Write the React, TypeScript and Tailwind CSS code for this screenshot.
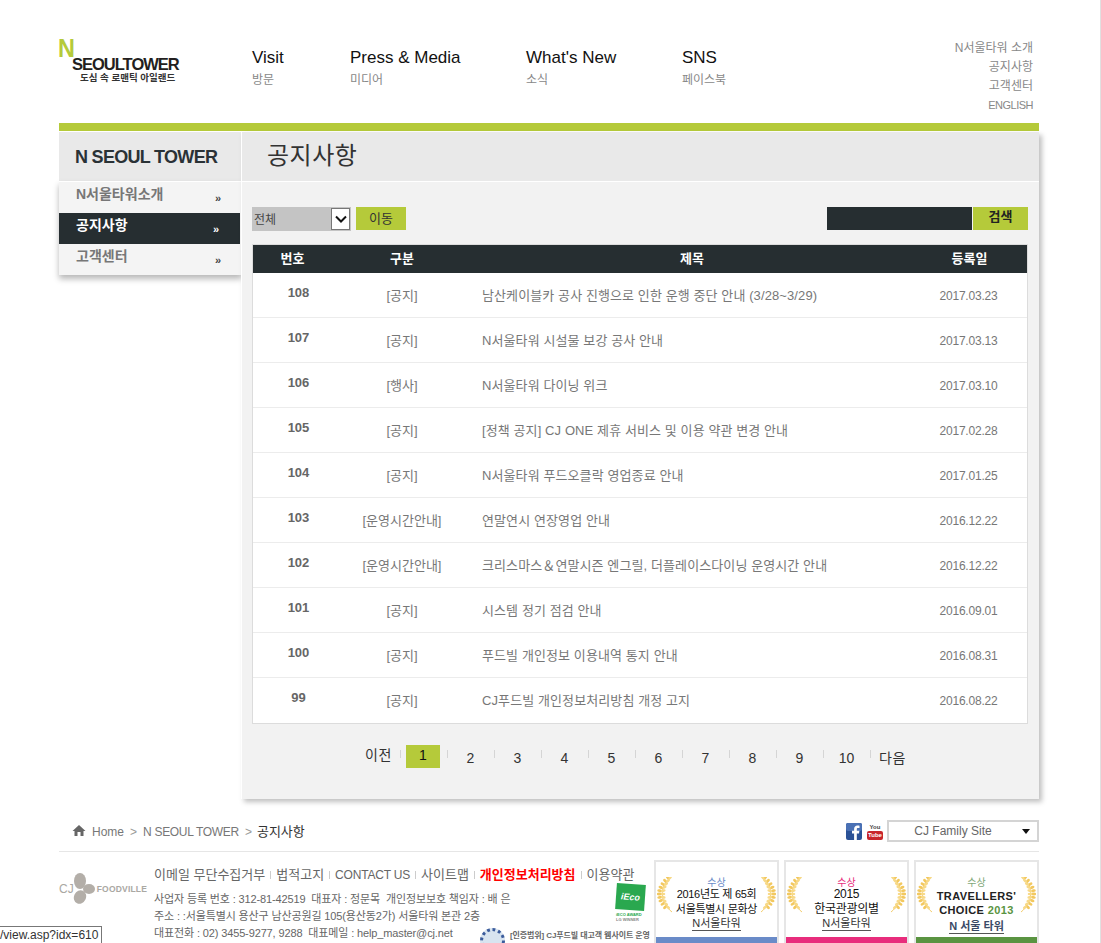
const KR = "font-['Liberation_Sans','Noto_Sans_CJK_KR',sans-serif]";

const NOTICES = [
  { no: 108, cat: "[공지]", title: "남산케이블카 공사 진행으로 인한 운행 중단 안내 (3/28~3/29)", date: "2017.03.23" },
  { no: 107, cat: "[공지]", title: "N서울타워 시설물 보강 공사 안내", date: "2017.03.13" },
  { no: 106, cat: "[행사]", title: "N서울타워 다이닝 위크", date: "2017.03.10" },
  { no: 105, cat: "[공지]", title: "[정책 공지] CJ ONE 제휴 서비스 및 이용 약관 변경 안내", date: "2017.02.28" },
  { no: 104, cat: "[공지]", title: "N서울타워 푸드오클락 영업종료 안내", date: "2017.01.25" },
  { no: 103, cat: "[운영시간안내]", title: "연말연시 연장영업 안내", date: "2016.12.22" },
  { no: 102, cat: "[운영시간안내]", title: "크리스마스＆연말시즌 엔그릴, 더플레이스다이닝 운영시간 안내", date: "2016.12.22" },
  { no: 101, cat: "[공지]", title: "시스템 정기 점검 안내", date: "2016.09.01" },
  { no: 100, cat: "[공지]", title: "푸드빌 개인정보 이용내역 통지 안내", date: "2016.08.31" },
  { no: 99, cat: "[공지]", title: "CJ푸드빌 개인정보처리방침 개정 고지", date: "2016.08.22" },
];

const NAV = [
  { en: "Visit", ko: "방문", w: "w-[98px]" },
  { en: "Press & Media", ko: "미디어", w: "w-[176px]" },
  { en: "What's New", ko: "소식", w: "w-[156px]" },
  { en: "SNS", ko: "페이스북", w: "w-[80px]" },
];

// 수상 배지 양쪽 월계수
function Laurel({ flip }: { flip?: boolean }) {
  const leaves = [0, 1, 2, 3, 4, 5, 6, 7, 8, 9];
  return (
    <svg width="16" height="36" viewBox="0 0 16 36" className={flip ? "-scale-x-100" : ""}>
      <path d="M12 2 C3 9 2 25 15 35" fill="none" stroke="#f3cd6d" strokeWidth="1" />
      {leaves.map((i) => {
        const t = i / 9;
        const x = 12 - 8 * Math.sin(t * Math.PI * 0.9);
        const y = 2 + t * 27;
        return (
          <g key={i}>
            <ellipse cx={x - 1.8} cy={y} rx="2.4" ry="1.4" fill="#f2c85f" transform={`rotate(${50 - t * 90} ${x} ${y})`} />
            <ellipse cx={x + 2} cy={y} rx="2.3" ry="1.3" fill="#f7d988" transform={`rotate(${-50 + t * 90} ${x} ${y})`} />
          </g>
        );
      })}
    </svg>
  );
}

function AwardCard({ label, labelColor, stripe, children, name }: { label: string; labelColor: string; stripe: string; children: React.ReactNode; name: React.ReactNode }) {
  return (
    <div className="w-[125px] h-[83px] border-2 border-[#e6e6e6] border-b-0 flex flex-col overflow-hidden">
      <div className="flex justify-between px-[1px] pt-[15px] h-[54px]">
        <Laurel />
        <div className="flex-1 flex flex-col items-center">
          <div className={`text-[10px] leading-[12px] ${labelColor}`}>{label}</div>
          {children}
        </div>
        <Laurel flip />
      </div>
      <div className="h-[17px] flex justify-center">{name}</div>
      <div className={`h-[6px] mt-auto ${stripe}`} />
    </div>
  );
}

export default function App() {
  return (
    <div className={`relative h-[943px] w-[1101px] overflow-hidden bg-white border-r border-[#e0e0e0] ${KR}`}>
      <div className="ml-[59px] w-[980px]">
        {/* 상단 헤더 */}
        <header className="h-[123px] flex">
          <div className="w-[193px] pt-[37px]">
            <div className="text-[#b5ca3a] font-bold text-[26px] leading-[22px] -ml-[1px] w-[16px] scale-x-90 origin-left">N</div>
            <div className="text-[#231f20] font-bold text-[16.5px] leading-[14px] -mt-[2px] ml-[13px] tracking-[-1px] whitespace-nowrap">SEOULTOWER</div>
            <div className="text-[#333] font-bold text-[9.5px] leading-[12px] mt-[1px] ml-[21px] whitespace-nowrap">도심 속 로맨틱 아일랜드</div>
          </div>
          <nav className="flex pt-[47px]">
            {NAV.map((n) => (
              <div key={n.en} className={n.w}>
                <div className="text-[17px] leading-[22px] text-[#111] whitespace-nowrap">{n.en}</div>
                <div className="text-[12px] leading-[14px] mt-[4px] text-[#888]">{n.ko}</div>
              </div>
            ))}
          </nav>
          <ul className="ml-auto mr-[6px] pt-[39px] text-right text-[12px] leading-[19px] text-[#888]">
            <li>N서울타워 소개</li>
            <li>공지사항</li>
            <li>고객센터</li>
            <li className="text-[11px] tracking-[-0.5px]">ENGLISH</li>
          </ul>
        </header>
        <div className="h-[8px] bg-[#b5ca3a]" />

        {/* 본문 */}
        <div className="flex mt-[1px]">
          <aside className="w-[183px]">
            <div className="h-[49px] bg-[#e9e9e9] pl-[16px] text-[#2a3236] font-bold text-[18px] leading-[50px] tracking-[-0.7px] whitespace-nowrap">N SEOUL TOWER</div>
            <div className="shadow-[0_4px_6px_rgba(0,0,0,0.28)] bg-[#f4f4f4] h-[94px] border-t border-white">
              {[
                ["N서울타워소개", false],
                ["공지사항", true],
                ["고객센터", false],
              ].map(([label, on]) => (
                <div
                  key={label as string}
                  className={`h-[31px] pl-[17px] pr-[21px] flex items-center justify-between text-[14px] font-bold ${on ? "bg-[#262e31] text-white mr-[2px]" : "text-[#777]"}`}
                >
                  <span className="-mt-[6px]">{label}</span>
                  <span className={`text-[11px] leading-none mt-[2px] ${on ? "text-white" : "text-[#444]"}`}>»</span>
                </div>
              ))}
            </div>
          </aside>

          <main className="w-[798px] shadow-[3px_3px_5px_rgba(0,0,0,0.25)] border-l border-white -ml-[1px] bg-[#f2f2f2]">
            <div className="h-[49px] bg-[#e9e9e9] border-b border-white pl-[25px] text-[24px] leading-[47px] text-[#333] tracking-[0.5px] box-content">공지사항</div>
            <div className="pl-[10px] pr-[11px] pt-[25px] h-[617px]">
              {/* 필터, 검색 */}
              <div className="flex items-start h-[37px]">
                <div className="w-[99px] h-[24px] bg-[#c4c4c4] flex items-center justify-between pl-[2px] pr-[1px] text-[12px] text-[#444]">
                  <span className="mt-[1px]">전체</span>
                  <span className="w-[19px] h-[22px] border border-[#777] bg-white flex items-center justify-center">
                    <svg width="12" height="8" viewBox="0 0 12 8">
                      <path d="M1 1.5 L6 6.5 L11 1.5" fill="none" stroke="#111" strokeWidth="2" />
                    </svg>
                  </span>
                </div>
                <div className="ml-[5px] w-[50px] h-[23px] bg-[#b5ca3a] text-center text-[13px] leading-[23px] text-[#333]">이동</div>
                <div className="ml-auto w-[145px] h-[23px] bg-[#262e31]" />
                <div className="ml-[1px] w-[55px] h-[23px] bg-[#b5ca3a] text-center text-[13px] leading-[19px] font-bold text-[#222]">검색</div>
              </div>

              {/* 공지 목록 */}
              <div className="border border-[#dcdcdc] bg-white w-[776px]">
                <div className="grid grid-cols-[79px_140px_440px_1fr] h-[28px] bg-[#262e31] text-white text-[13px] font-bold leading-[27px] text-center">
                  <div>번호</div>
                  <div>구분</div>
                  <div>제목</div>
                  <div>등록일</div>
                </div>
                {NOTICES.map((n, i) => (
                  <div
                    key={n.no}
                    className={`grid grid-cols-[79px_140px_440px_1fr] h-[45px] text-[13px] text-[#777] text-center ${i < 9 ? "border-b border-[#ececec]" : ""}`}
                  >
                    <div className="font-bold text-[#666] pt-[11px] pl-[12px] leading-[18px]">{n.no}</div>
                    <div className="pt-[14px] leading-[18px]">{n.cat}</div>
                    <div className="pt-[14px] leading-[18px] text-left pl-[10px] whitespace-nowrap tracking-[0.1px]">{n.title}</div>
                    <div className="pt-[14px] pr-[2px] leading-[18px] text-[12px] tracking-[-0.2px]">{n.date}</div>
                  </div>
                ))}
              </div>

              {/* 페이지 */}
              <div className="flex items-start mt-[21px] ml-[110px] text-[14px] text-[#333]">
                <div className="w-[38px] pl-[3px] leading-[20px] tracking-[0.5px] whitespace-nowrap">이전</div>
                {[1, 2, 3, 4, 5, 6, 7, 8, 9, 10].map((p) => (
                  <div key={p} className="w-[47px] h-[24px] flex">
                    <span className="w-px h-[8px] mt-[5px] bg-[#d5d5d5]" />
                    {p === 1 ? (
                      <span className="ml-[5px] w-[34px] h-[23px] bg-[#b5ca3a] text-center text-[14px] leading-[20px] text-[#111]">1</span>
                    ) : (
                      <span className="flex-1 text-center leading-[24px] pt-[1px] pr-[1px]">{p}</span>
                    )}
                  </div>
                ))}
                <span className="w-px h-[8px] mt-[5px] bg-[#d5d5d5]" />
                <div className="pl-[8px] leading-[24px] pt-[1px] tracking-[0.5px]">다음</div>
              </div>
            </div>
          </main>
        </div>

        {/* 경로 */}
        <div className="h-[53px] pt-[21px] border-b border-[#e6e6e6] flex items-start">
          <div className="flex items-center h-[23px] pl-[13px] text-[12px] text-[#777]">
            <svg width="14" height="13" viewBox="0 0 14 13" className="mr-[6px] -mt-[3px]">
              <path d="M7 1 L0.5 7 H2.5 V12 H11.5 V7 H13.5 Z" fill="#666" />
              <rect x="5.5" y="8" width="3" height="4" fill="#fff" />
            </svg>
            <span>Home</span>
            <span className="mx-[6px] text-[#999]">&gt;</span>
            <span className="tracking-[-0.3px]">N SEOUL TOWER</span>
            <span className="ml-[6px] mr-[5px] text-[#999]">&gt;</span>
            <span className="text-[#333] text-[13px]">공지사항</span>
          </div>
          <div className="ml-auto flex items-center">
            <svg width="16" height="17" viewBox="0 0 16 17" className="mr-[5px]">
              <rect width="16" height="17" rx="2" fill="#2b5297" />
              <rect width="16" height="8" rx="2" fill="#4a71b5" />
              <path d="M10.8 17 V10.5 H13 L13.4 7.8 H10.8 V6.3 C10.8 5.5 11 5 12.1 5 H13.5 V2.7 C13.2 2.6 12.4 2.6 11.5 2.6 C9.5 2.6 8.1 3.8 8.1 6 V7.8 H6 V10.5 H8.1 V17 Z" fill="#fff" />
            </svg>
            <div className="w-[16px] h-[17px] mr-[4px] flex flex-col items-center">
              <span className="text-[6px] leading-[8px] font-bold text-[#444]">You</span>
              <span className="w-[16px] h-[9px] rounded-[2px] bg-[#c8252b] text-white text-[6px] leading-[9px] font-bold text-center">Tube</span>
            </div>
            <div className="w-[152px] h-[22px] border-2 border-[#d4d4d4] flex items-center justify-center relative pr-[20px] text-[12px] text-[#666]">
              CJ Family Site
              <span className="absolute right-[7px] top-[7px] w-0 h-0 border-x-[4px] border-x-transparent border-t-[5px] border-t-[#111]" />
            </div>
          </div>
        </div>

        {/* 푸터 */}
        <footer className="flex items-start pt-[8px]">
          <div className="w-[95px] mt-[13px] flex items-center">
            <span className="text-[12px] text-[#aaa8a3]">CJ</span>
            <svg width="24" height="32" viewBox="0 0 24 32" className="-ml-[3px]">
              <ellipse cx="9" cy="8" rx="6" ry="8" fill="#b3aea8" />
              <ellipse cx="18" cy="16" rx="6" ry="5" fill="#b3aea8" />
              <ellipse cx="9" cy="24" rx="6" ry="7" fill="#b3aea8" transform="rotate(25 9 24)" />
            </svg>
            <span className="ml-[2px] text-[8.5px] font-bold text-[#aaa8a3] tracking-[0.2px]">FOODVILLE</span>
          </div>
          <div className="w-[462px] pt-[7px] text-[#666]">
            <div className="flex items-center text-[13px] leading-[16px] whitespace-nowrap">
              <span>이메일 무단수집거부</span>
              <span className="shrink-0 w-px h-[8px] bg-[#ccc] mx-[5px]" />
              <span>법적고지</span>
              <span className="shrink-0 w-px h-[8px] bg-[#ccc] mx-[5px]" />
              <span className="text-[12px] tracking-[-0.2px]">CONTACT US</span>
              <span className="shrink-0 w-px h-[8px] bg-[#ccc] mx-[5px]" />
              <span>사이트맵</span>
              <span className="shrink-0 w-px h-[8px] bg-[#ccc] mx-[5px]" />
              <span className="font-bold text-[#f00]">개인정보처리방침</span>
              <span className="shrink-0 w-px h-[8px] bg-[#ccc] mx-[5px]" />
              <span>이용약관</span>
            </div>
            <div className="mt-[8px] text-[11px] leading-[17px] whitespace-nowrap tracking-[-0.13px]">
              <div>사업자 등록 번호 : 312-81-42519&nbsp;&nbsp;대표자 : 정문목&nbsp;&nbsp;개인정보보호 책임자 : 배 은</div>
              <div>주소 : :서울특별시 용산구 남산공원길 105(용산동2가) 서울타워 본관 2층</div>
              <div>대표전화 : 02) 3455-9277, 9288&nbsp;&nbsp;대표메일 : help_master@cj.net</div>
            </div>
            <div className="flex items-center -mt-[14px] ml-[326px] whitespace-nowrap">
              <span className="w-[25px] h-[25px] shrink-0 rounded-full border-[3px] border-dotted border-[#3b5c9c] bg-[#d8e4f0]" />
              <span className="ml-[5px] -mt-[9px] text-[8px] font-bold text-[#666] tracking-[-0.1px]">[인증범위] CJ푸드빌 대고객 웹사이트 운영</span>
            </div>
          </div>
          <div className="w-[38px] mt-[24px]">
            <div className="w-[29px] h-[26px] bg-[#2aa84f] text-white text-[9px] italic font-bold leading-[26px] text-center rotate-[4deg]">iEco</div>
            <div className="text-[4px] leading-[5px] mt-[2px] text-[#2aa84f] font-bold whitespace-nowrap">iECO AWARD</div>
            <div className="text-[4px] leading-[5px] text-[#888] font-bold whitespace-nowrap">LG WINNER</div>
          </div>
          <div className="flex gap-[5px]">
            <AwardCard
              label="수상"
              labelColor="text-[#6a8bc8]"
              stripe="bg-[#6a8bc8]"
              name={<span className="text-[11px] leading-[15px] border-b border-[#555] text-[#333] h-[15px]">N서울타워</span>}
            >
              <div className="-mt-[2px] text-[11px] leading-[15px] text-[#111] text-center whitespace-nowrap tracking-[-0.3px]">2016년도 제 65회<br />서울특별시 문화상</div>
            </AwardCard>
            <AwardCard
              label="수상"
              labelColor="text-[#e82d7c]"
              stripe="bg-[#e82d7c]"
              name={<span className="text-[11px] leading-[15px] border-b border-[#555] text-[#333] h-[15px]">N서울타워</span>}
            >
              <div className="-mt-[2px] text-[12px] leading-[15px] text-[#111] text-center whitespace-nowrap tracking-[-0.3px]">2015<br />한국관광의별</div>
            </AwardCard>
            <AwardCard
              label="수상"
              labelColor="text-[#7fa878]"
              stripe="bg-[#5a9441]"
              name={<span className="mt-[3px] text-[11px] leading-[15px] border-b border-[#555] text-[#3a4a66] font-bold h-[15px]">N 서울 타워</span>}
            >
              <div className="text-[11px] leading-[14px] font-bold text-[#222] text-center whitespace-nowrap tracking-[0.4px]">TRAVELLERS'<br />CHOICE <span className="text-[#5a9441]">2013</span></div>
            </AwardCard>
          </div>
        </footer>
      </div>

      {/* 브라우저 상태 표시줄 */}
      <div className="absolute left-0 bottom-0 h-[17px] w-[102px] bg-white border-t border-r border-[#777] text-[12px] leading-[16px] text-[#333] overflow-hidden whitespace-nowrap">/view.asp?idx=610</div>
    </div>
  );
}
